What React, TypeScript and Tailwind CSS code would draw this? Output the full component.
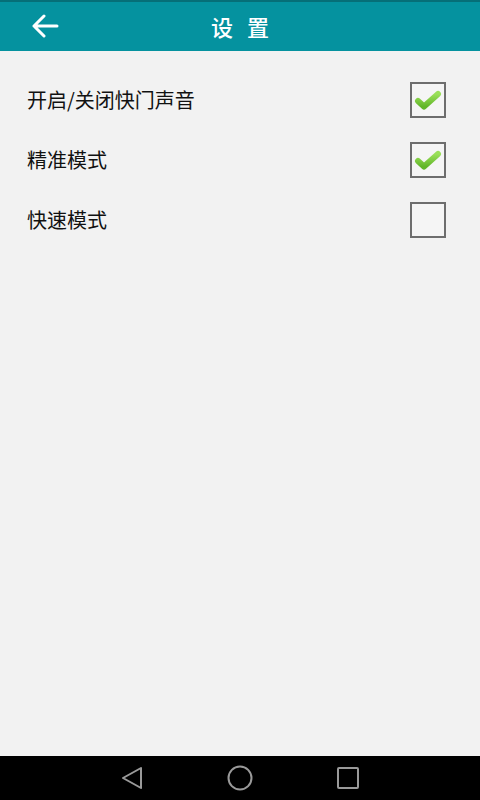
const rows = [
  { label: "开启/关闭快门声音", checked: true },
  { label: "精准模式", checked: true },
  { label: "快速模式", checked: false },
];

function CheckBox({ checked }: { checked: boolean }) {
  return (
    <div className="flex h-[36px] w-[36px] items-center justify-center border-2 border-[#6e6e6e] bg-[#f5f5f5]">
      {checked && (
        <svg width="28" height="26" viewBox="0 0 28 26">
          <defs>
            <linearGradient id="ck" x1="0" y1="0" x2="0" y2="1">
              <stop offset="0" stopColor="#9be05a" />
              <stop offset="1" stopColor="#62b62a" />
            </linearGradient>
          </defs>
          <path
            d="M4 14 L10 19.5 L24 7"
            fill="none"
            stroke="url(#ck)"
            strokeWidth="6"
            strokeLinecap="round"
            strokeLinejoin="round"
          />
        </svg>
      )}
    </div>
  );
}

export default function App() {
  return (
    <div className="flex h-[800px] w-[480px] flex-col bg-[#f2f2f2] font-['Noto_Sans_CJK_SC',sans-serif]">
      <header className="relative flex h-[51px] items-center justify-center border-t-2 border-[#066f78] bg-[#05929f]">
        <button className="absolute left-[31px] top-[12px] text-white" aria-label="Back">
          <svg width="28" height="24" viewBox="0 0 28 24">
            <path
              d="M3 12 H26 M13 2 L3 12 L13 22"
              fill="none"
              stroke="#fff"
              strokeWidth="3"
              strokeLinecap="round"
              strokeLinejoin="round"
            />
          </svg>
        </button>
        <h1 className="pl-[14px] text-[22px] font-medium tracking-[14px] text-white">设置</h1>
      </header>

      <main className="flex flex-1 flex-col pt-[19px]">
        {rows.map((row) => (
          <div key={row.label} className="flex h-[60px] items-center justify-between pl-[27px] pr-[34px]">
            <span className="text-[20px] text-[#111]">{row.label}</span>
            <CheckBox checked={row.checked} />
          </div>
        ))}
      </main>

      <nav className="flex h-[44px] items-center justify-center gap-[83px] bg-black">
        <svg width="24" height="26" viewBox="0 0 24 26">
          <path d="M21 3 L3 13 L21 23 Z" fill="none" stroke="#9a9a9a" strokeWidth="2" strokeLinejoin="round" />
        </svg>
        <svg width="26" height="26" viewBox="0 0 26 26">
          <circle cx="13" cy="13" r="11.5" fill="none" stroke="#9a9a9a" strokeWidth="2" />
        </svg>
        <svg width="24" height="24" viewBox="0 0 24 24">
          <rect x="2" y="2" width="20" height="20" rx="1" fill="none" stroke="#9a9a9a" strokeWidth="2" />
        </svg>
      </nav>
    </div>
  );
}
